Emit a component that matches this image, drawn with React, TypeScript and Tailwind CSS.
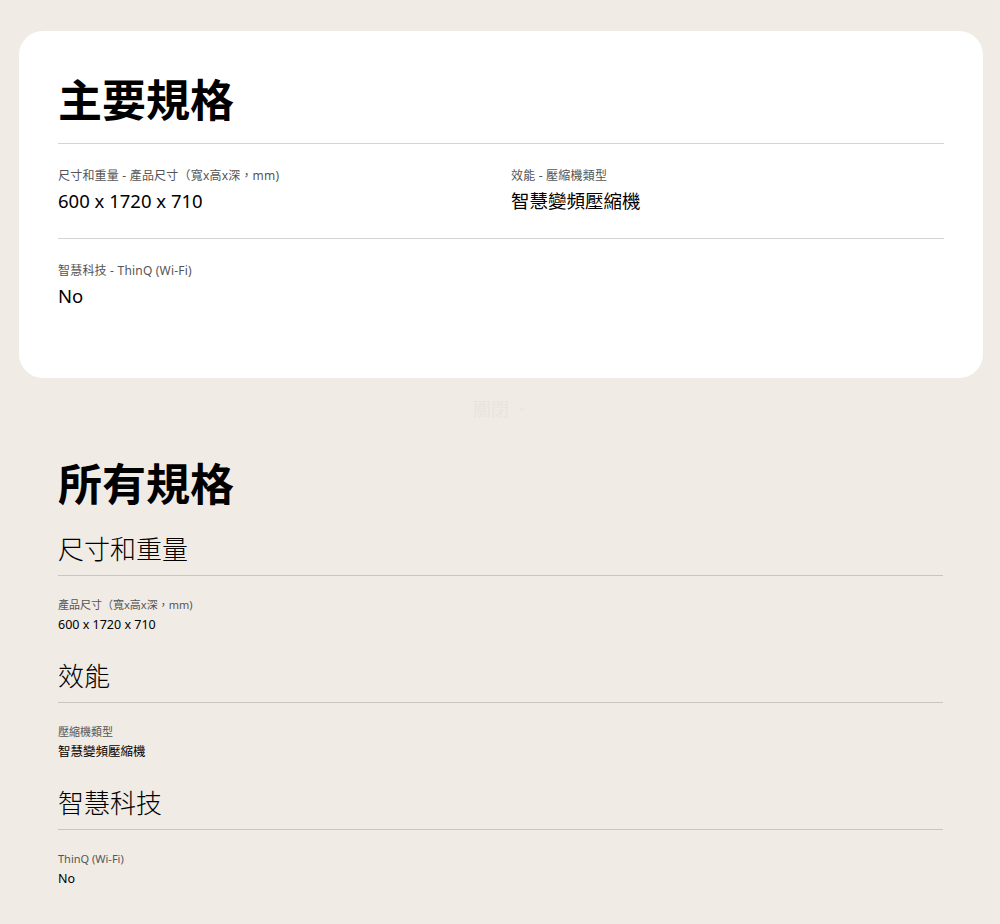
import React from 'react'

const font = "font-['Noto_Sans','Noto_Sans_CJK_TC',sans-serif]"

type Spec = { label: string; value: string }

const keySpecs: Spec[][] = [
  [
    { label: '尺寸和重量 - 產品尺寸（寬x高x深，mm)', value: '600 x 1720 x 710' },
    { label: '效能 - 壓縮機類型', value: '智慧變頻壓縮機' },
  ],
  [{ label: '智慧科技 - ThinQ (Wi-Fi)', value: 'No' }],
]

const allSpecs: { title: string; items: Spec[] }[] = [
  { title: '尺寸和重量', items: [{ label: '產品尺寸（寬x高x深，mm)', value: '600 x 1720 x 710' }] },
  { title: '效能', items: [{ label: '壓縮機類型', value: '智慧變頻壓縮機' }] },
  { title: '智慧科技', items: [{ label: 'ThinQ (Wi-Fi)', value: 'No' }] },
]

const App: React.FC = () => {
  return (
    <div className={`${font} min-h-[924px] bg-[#f0ebe5] pt-[31px] text-black`}>
      <section className="ml-[19px] w-[964px] rounded-[24px] bg-white px-[39px] pt-[43px] pb-[68px]">
        <h2 className="text-[44px] font-bold leading-[52px]">主要規格</h2>
        <div className="mt-[17px] border-t border-[#d4d4d4]">
          {keySpecs.map((row, i) => (
            <div
              key={i}
              className={`grid grid-cols-2 gap-x-5 pt-[23px] ${i < keySpecs.length - 1 ? 'border-b border-[#d4d4d4] pb-[23px]' : ''}`}
            >
              {row.map((s) => (
                <div key={s.label}>
                  <p className="text-[12px] leading-[18px] tracking-[0.2px] text-[#555]">{s.label}</p>
                  <p className="mt-[2px] text-[18.5px] leading-[28px]">{s.value}</p>
                </div>
              ))}
            </div>
          ))}
        </div>
      </section>

      <div className="mt-[19px] flex items-center justify-center gap-2 text-[18px] leading-[24px] text-[#e9e4dd]">
        <span>關閉</span>
        <svg width="10" height="10" viewBox="0 0 10 10" fill="none" stroke="currentColor" strokeWidth="1.2">
          <path d="M2 3.5l3 3 3-3" />
        </svg>
      </div>

      <section className="pl-[58px] pr-[57px] pt-[37px] pb-[30px]">
        <h2 className="text-[44px] font-bold leading-[52px]">所有規格</h2>
        <div className="mt-[22px]">
          {allSpecs.map((g) => (
            <div key={g.title} className="pb-[25px]">
              <h3 className="border-b border-[#c9c5c0] pb-[9px] text-[26px] font-light leading-[34px]">{g.title}</h3>
              {g.items.map((s) => (
                <div key={s.label} className="pt-[21px]">
                  <p className="text-[11px] leading-[16px] text-[#555]">{s.label}</p>
                  <p className="mt-[3px] text-[12.5px] leading-[18px]">{s.value}</p>
                </div>
              ))}
            </div>
          ))}
        </div>
      </section>
    </div>
  )
}

export default App
